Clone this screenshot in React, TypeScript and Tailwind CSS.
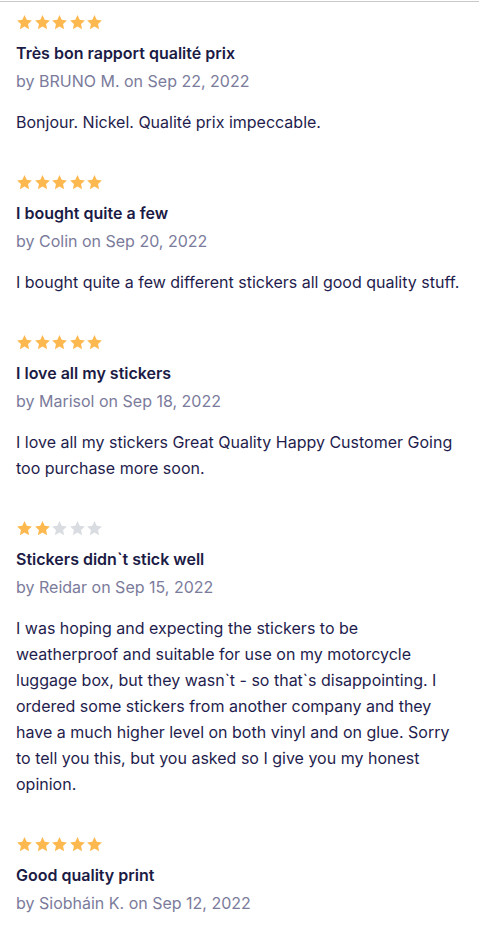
const reviews = [
  {
    rating: 5,
    title: "Très bon rapport qualité prix",
    author: "BRUNO M.",
    date: "Sep 22, 2022",
    body: "Bonjour. Nickel. Qualité prix impeccable.",
  },
  {
    rating: 5,
    title: "I bought quite a few",
    author: "Colin",
    date: "Sep 20, 2022",
    body: "I bought quite a few different stickers all good quality stuff.",
  },
  {
    rating: 5,
    title: "I love all my stickers",
    author: "Marisol",
    date: "Sep 18, 2022",
    body: "I love all my stickers Great Quality Happy Customer Going too purchase more soon.",
  },
  {
    rating: 2,
    title: "Stickers didn`t stick well",
    author: "Reidar",
    date: "Sep 15, 2022",
    body: "I was hoping and expecting the stickers to be weatherproof and suitable for use on my motorcycle luggage box, but they wasn`t - so that`s disappointing. I ordered some stickers from another company and they have a much higher level on both vinyl and on glue. Sorry to tell you this, but you asked so I give you my honest opinion.",
  },
  {
    rating: 5,
    title: "Good quality print",
    author: "Siobháin K.",
    date: "Sep 12, 2022",
    body: "",
  },
];

function Star({ filled }: { filled: boolean }) {
  return (
    <svg viewBox="0 0 20 20" className={`h-[17px] w-[17px] ${filled ? "fill-[#fdb94f]" : "fill-[#d9dce1]"}`}>
      <path d="M10 1.2l2.6 5.6 6.1.7-4.5 4.2 1.2 6.1L10 14.8l-5.4 3 1.2-6.1L1.3 7.5l6.1-.7z" />
    </svg>
  );
}

export default function App() {
  return (
    <div className="min-h-screen bg-white pt-px font-['Inter',sans-serif]">
      <div className="border-t border-[#c9c9c9] px-4 pt-[12px]">
        {reviews.map((r) => (
          <div key={r.title} className="pb-[39px]">
            <div className="flex gap-[0.5px]">
              {[0, 1, 2, 3, 4].map((i) => (
                <Star key={i} filled={i < r.rating} />
              ))}
            </div>
            <h3 className="mt-[9px] mb-[2px] text-base font-semibold leading-[26px] text-[#1b1b45]">{r.title}</h3>
            <p className="text-base leading-[26px] text-[#7b7b9b]">
              by {r.author} on {r.date}
            </p>
            {r.body && <p className="mt-[15px] text-base leading-[26px] text-[#1f1d4d]">{r.body}</p>}
          </div>
        ))}
      </div>
    </div>
  );
}
